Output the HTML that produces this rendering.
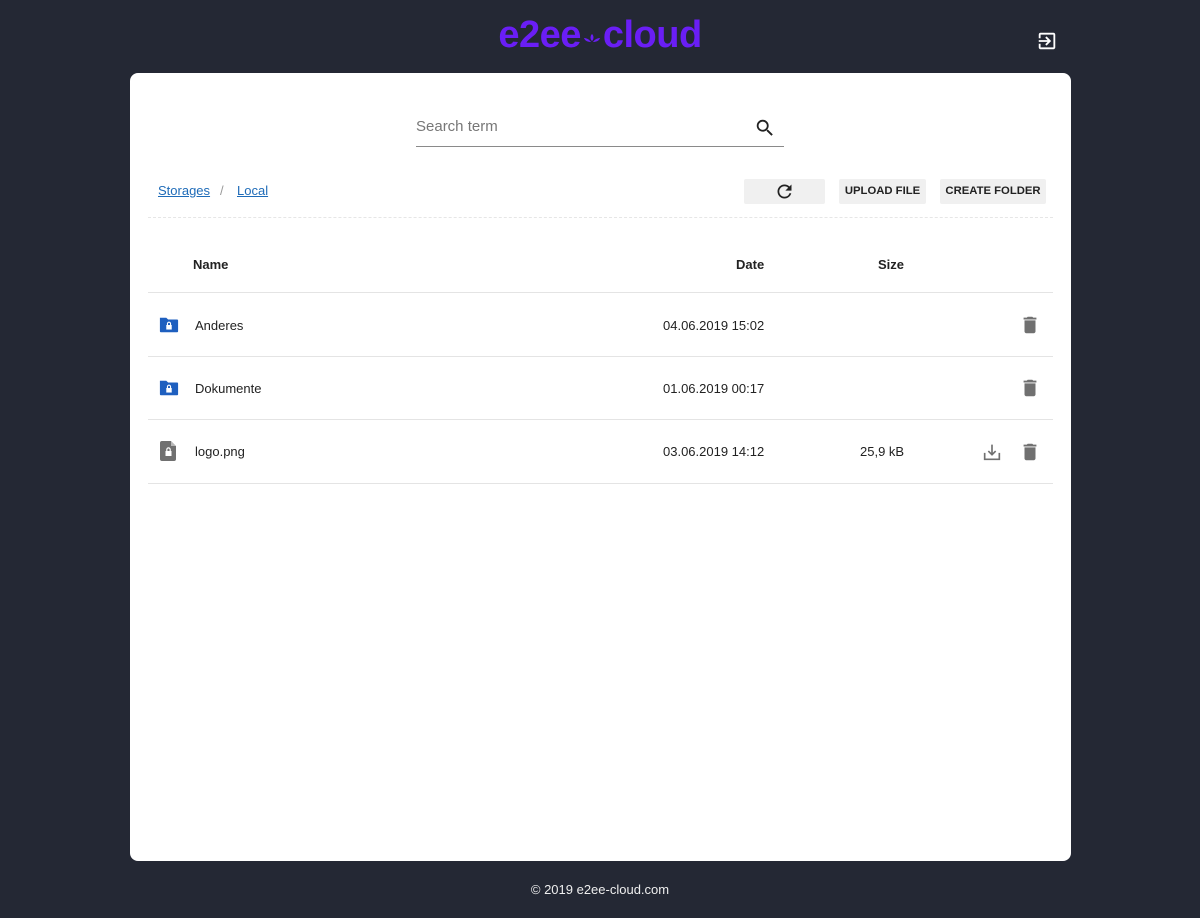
<!DOCTYPE html>
<html><head><meta charset="utf-8"><style>
*{box-sizing:border-box}
body{margin:0;width:1200px;height:918px;background:#242834;font-family:"Liberation Sans",sans-serif;position:relative;overflow:hidden}
.logo{position:absolute;left:0;width:1200px;top:13px;text-align:center;color:#6a1ef5;font-weight:bold;font-size:38px;letter-spacing:-0.5px;font-family:"Liberation Sans",sans-serif;line-height:44px}
.card{position:absolute;left:130px;top:73px;width:941px;height:788px;background:#fff;border-radius:8px}
.search{position:absolute;left:286px;top:36px;width:368px;height:38px;border-bottom:1px solid #8a8a8a}
.search span{position:absolute;left:0;top:9px;font-size:15px;color:#777}
.bc{position:absolute;top:110px;font-size:13px;color:#1e6bb8;text-decoration:underline}
.btn{position:absolute;top:106px;height:25px;background:#f0f0f0;font-size:11.3px;font-weight:bold;color:#222;text-align:center;line-height:25px;border-radius:2px}
.sep{position:absolute;left:18px;width:905px;top:144px;border-top:1px dashed #e6e6e6}
.th{position:absolute;top:184px;font-size:13px;font-weight:bold;color:#222}
.line{position:absolute;left:18px;width:905px;border-top:1px solid #e4e4e4}
.td{position:absolute;font-size:13px;color:#222}
.foot{position:absolute;top:882px;width:1200px;text-align:center;color:#eee;font-size:13px}
</style></head><body>
<div class="logo">e2ee<svg width="20" height="20" viewBox="0 0 20 20" style="vertical-align:-1px;margin:0 1px"><path fill="#6a1ef5" d="M10 6c-2 2-2 5 0 7 2-2 2-5 0-7zM2 10c2 0 5 1 7 4-3 0-6-1-7-4zM18 10c-2 0-5 1-7 4 3 0 6-1 7-4z"/></svg>cloud</div>
<svg style="position:absolute;left:1036px;top:30px" width="22" height="22" viewBox="0 0 24 24"><path fill="#fff" d="M10.09 15.59L11.5 17l5-5-5-5-1.41 1.41L12.67 11H3v2h9.67l-2.58 2.59zM19 3H5c-1.11 0-2 .9-2 2v4h2V5h14v14H5v-4H3v4c0 1.1.89 2 2 2h14c1.1 0 2-.9 2-2V5c0-1.1-.9-2-2-2z"/></svg>
<div class="card">
<div class="search"><span>Search term</span>
<svg style="position:absolute;right:8px;top:8px" width="22" height="22" viewBox="0 0 24 24"><path fill="#222" d="M15.5 14h-.79l-.28-.27A6.471 6.471 0 0016 9.5 6.5 6.5 0 109.5 16c1.61 0 3.090-.59 4.23-1.57l.27.28v.79l5 4.99L20.490 19l-4.99-5zm-6 0C7.01 14 5 11.99 5 9.5S7.01 5 9.5 5 14 7.01 14 9.5 11.99 14 9.5 14z"/></svg></div>
<div class="bc" style="left:28px">Storages</div>
<div class="td" style="left:90px;top:110px;color:#999">/</div>
<div class="bc" style="left:107px">Local</div>
<div class="btn" style="left:614px;width:81px"><svg style="margin-top:2px" width="21" height="21" viewBox="0 0 24 24"><path fill="#222" d="M17.65 6.35A7.958 7.958 0 0012 4c-4.42 0-7.99 3.58-7.99 8s3.57 8 7.99 8c3.73 0 6.84-2.55 7.73-6h-2.08A5.99 5.99 0 0112 18c-3.31 0-6-2.690-6-6s2.69-6 6-6c1.66 0 3.14.69 4.22 1.78L13 11h7V4l-2.35 2.35z"/></svg></div>
<div class="btn" style="left:709px;width:87px">UPLOAD FILE</div>
<div class="btn" style="left:810px;width:106px">CREATE FOLDER</div>
<div class="sep"></div>
<div class="th" style="left:63px">Name</div>
<div class="th" style="left:606px">Date</div>
<div class="th" style="left:748px">Size</div>
<div class="line" style="top:219px"></div>
<div class="line" style="top:283px"></div>
<div class="line" style="top:346px"></div>
<div class="line" style="top:410px"></div>

<svg style="position:absolute;left:28px;top:242px" width="22" height="20" viewBox="0 0 24 22"><path fill="#1e5fbf" d="M2 3h7l2 2h10a1 1 0 011 1v12a1 1 0 01-1 1H3a1 1 0 01-1-1z"/><rect x="9" y="11" width="6" height="5" fill="#fff"/><path d="M10.3 11V9.6a1.7 1.7 0 013.4 0V11" stroke="#fff" stroke-width="1.2" fill="none"/></svg>
<div class="td" style="left:65px;top:245px">Anderes</div>
<div class="td" style="left:533px;top:245px">04.06.2019 15:02</div>

<svg style="position:absolute;left:28px;top:305px" width="22" height="20" viewBox="0 0 24 22"><path fill="#1e5fbf" d="M2 3h7l2 2h10a1 1 0 011 1v12a1 1 0 01-1 1H3a1 1 0 01-1-1z"/><rect x="9" y="11" width="6" height="5" fill="#fff"/><path d="M10.3 11V9.6a1.7 1.7 0 013.4 0V11" stroke="#fff" stroke-width="1.2" fill="none"/></svg>
<div class="td" style="left:65px;top:308px">Dokumente</div>
<div class="td" style="left:533px;top:308px">01.06.2019 00:17</div>

<svg style="position:absolute;left:30px;top:368px" width="17" height="20" viewBox="0 0 17 20"><path fill="#707070" d="M2 0h9l5 5v13a2 2 0 01-2 2H2a2 2 0 01-2-2V2a2 2 0 012-2z"/><path fill="#fff" d="M11 0v5h5z" opacity=".5"/><rect x="5.5" y="10" width="6" height="5" fill="#fff"/><path d="M6.8 10V8.6a1.7 1.7 0 013.4 0V10" stroke="#fff" stroke-width="1.2" fill="none"/></svg>
<div class="td" style="left:65px;top:371px">logo.png</div>
<div class="td" style="left:533px;top:371px">03.06.2019 14:12</div>
<div class="td" style="left:730px;top:371px">25,9 kB</div>

<svg style="position:absolute;left:889px;top:241px" width="22" height="22" viewBox="0 0 24 24"><path fill="#707070" d="M6 19c0 1.1.9 2 2 2h8c1.1 0 2-.9 2-2V7H6v12zM19 4h-3.5l-1-1h-5l-1 1H5v2h14V4z"/></svg>
<svg style="position:absolute;left:889px;top:304px" width="22" height="22" viewBox="0 0 24 24"><path fill="#707070" d="M6 19c0 1.1.9 2 2 2h8c1.1 0 2-.9 2-2V7H6v12zM19 4h-3.5l-1-1h-5l-1 1H5v2h14V4z"/></svg>
<svg style="position:absolute;left:889px;top:368px" width="22" height="22" viewBox="0 0 24 24"><path fill="#707070" d="M6 19c0 1.1.9 2 2 2h8c1.1 0 2-.9 2-2V7H6v12zM19 4h-3.5l-1-1h-5l-1 1H5v2h14V4z"/></svg>
<svg style="position:absolute;left:851px;top:368px" width="22" height="22" viewBox="0 0 24 24"><path d="M4 13v7h16v-7M12 4v11M8 11l4 4 4-4" stroke="#707070" stroke-width="1.8" fill="none"/></svg>
</div>
<div class="foot">© 2019 e2ee-cloud.com</div>
</body></html>
